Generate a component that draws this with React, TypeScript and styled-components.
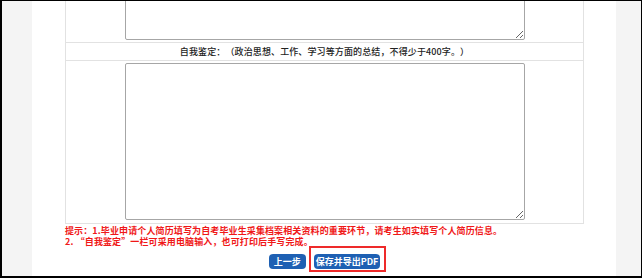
import React from 'react'
import styled, { createGlobalStyle } from 'styled-components'

const GlobalStyle = createGlobalStyle`
  html, body {
    margin: 0;
    padding: 0;
    background: #ffffff;
  }
  body {
    font-family: 'Noto Sans CJK SC', 'Noto Sans', sans-serif;
    text-spacing-trim: space-all;
  }
`

const Frame = styled.div`
  width: 642px;
  height: 278px;
  box-sizing: border-box;
  border-style: solid;
  border-color: #000;
  border-width: 1px 1px 2px 2px;
  background: #f4f4f4;
  padding-left: 30px;
  display: flex;
  overflow: hidden;
`

const Page = styled.div`
  width: 584px;
  background: #fff;
  padding: 0 33px;
  box-sizing: border-box;
  display: flex;
  flex-direction: column;
`

const Table = styled.div`
  margin-top: -63px;
  width: 519px;
  box-sizing: border-box;
  border-left: 1px solid #e2e2e2;
  border-right: 1px solid #e2e2e2;
  display: flex;
  flex-direction: column;
`

const Row = styled.div<{ $bottom?: number }>`
  border-bottom: 1px solid #e2e2e2;
  padding: 2px 0 ${p => p.$bottom ?? 2}px;
  display: flex;
  justify-content: center;
`

const HeadRow = styled.div`
  border-bottom: 1px solid #e2e2e2;
  height: 17px;
  display: flex;
  align-items: center;
  justify-content: center;
  font-size: 9px;
  font-weight: 500;
  letter-spacing: 0.12px;
  color: #222;
`

const Area = styled.textarea<{ $h: number }>`
  display: block;
  width: 400px;
  height: ${p => p.$h}px;
  box-sizing: border-box;
  margin: 0;
  border: 1px solid #a6a6a6;
  border-radius: 2px;
  background: #fff;
  outline: none;
  font-family: inherit;
`

const Tips = styled.div`
  padding-top: 1px;
  font-size: 9px;
  line-height: 11px;
  font-weight: 700;
  letter-spacing: 0.12px;
  color: #f01818;
  white-space: nowrap;
`

const Buttons = styled.div`
  margin-top: 7px;
  width: 519px;
  display: flex;
  justify-content: center;
  gap: 8px;
`

const Button = styled.button<{ $pad?: number }>`
  height: 15px;
  padding: 0 ${p => p.$pad ?? 5}px;
  border: none;
  border-radius: 4px;
  background: #1e60b3;
  color: #fff;
  font-family: inherit;
  font-size: 9px;
  font-weight: 700;
  line-height: 15px;
  cursor: pointer;
`

const Marked = styled.span`
  position: relative;
  display: inline-flex;
  &::after {
    content: '';
    position: absolute;
    top: -8px;
    left: -5px;
    right: -6px;
    bottom: -3px;
    border: 2px solid #ee2a2a;
    pointer-events: none;
  }
`

export default function App() {
  return (
    <>
      <GlobalStyle />
      <Frame>
        <Page lang="zh-CN">
          <Table>
            <Row>
              <Area $h={100} />
            </Row>
            <HeadRow>自我鉴定：（政治思想、工作、学习等方面的总结，不得少于400字。）</HeadRow>
            <Row $bottom={3}>
              <Area $h={157} />
            </Row>
          </Table>
          <Tips>
            <div>提示：1.毕业申请个人简历填写为自考毕业生采集档案相关资料的重要环节，请考生如实填写个人简历信息。</div>
            <div>2. “自我鉴定”一栏可采用电脑输入，也可打印后手写完成。</div>
          </Tips>
          <Buttons>
            <Button>上一步</Button>
            <Marked>
              <Button $pad={2}>保存并导出PDF</Button>
            </Marked>
          </Buttons>
        </Page>
      </Frame>
    </>
  )
}
